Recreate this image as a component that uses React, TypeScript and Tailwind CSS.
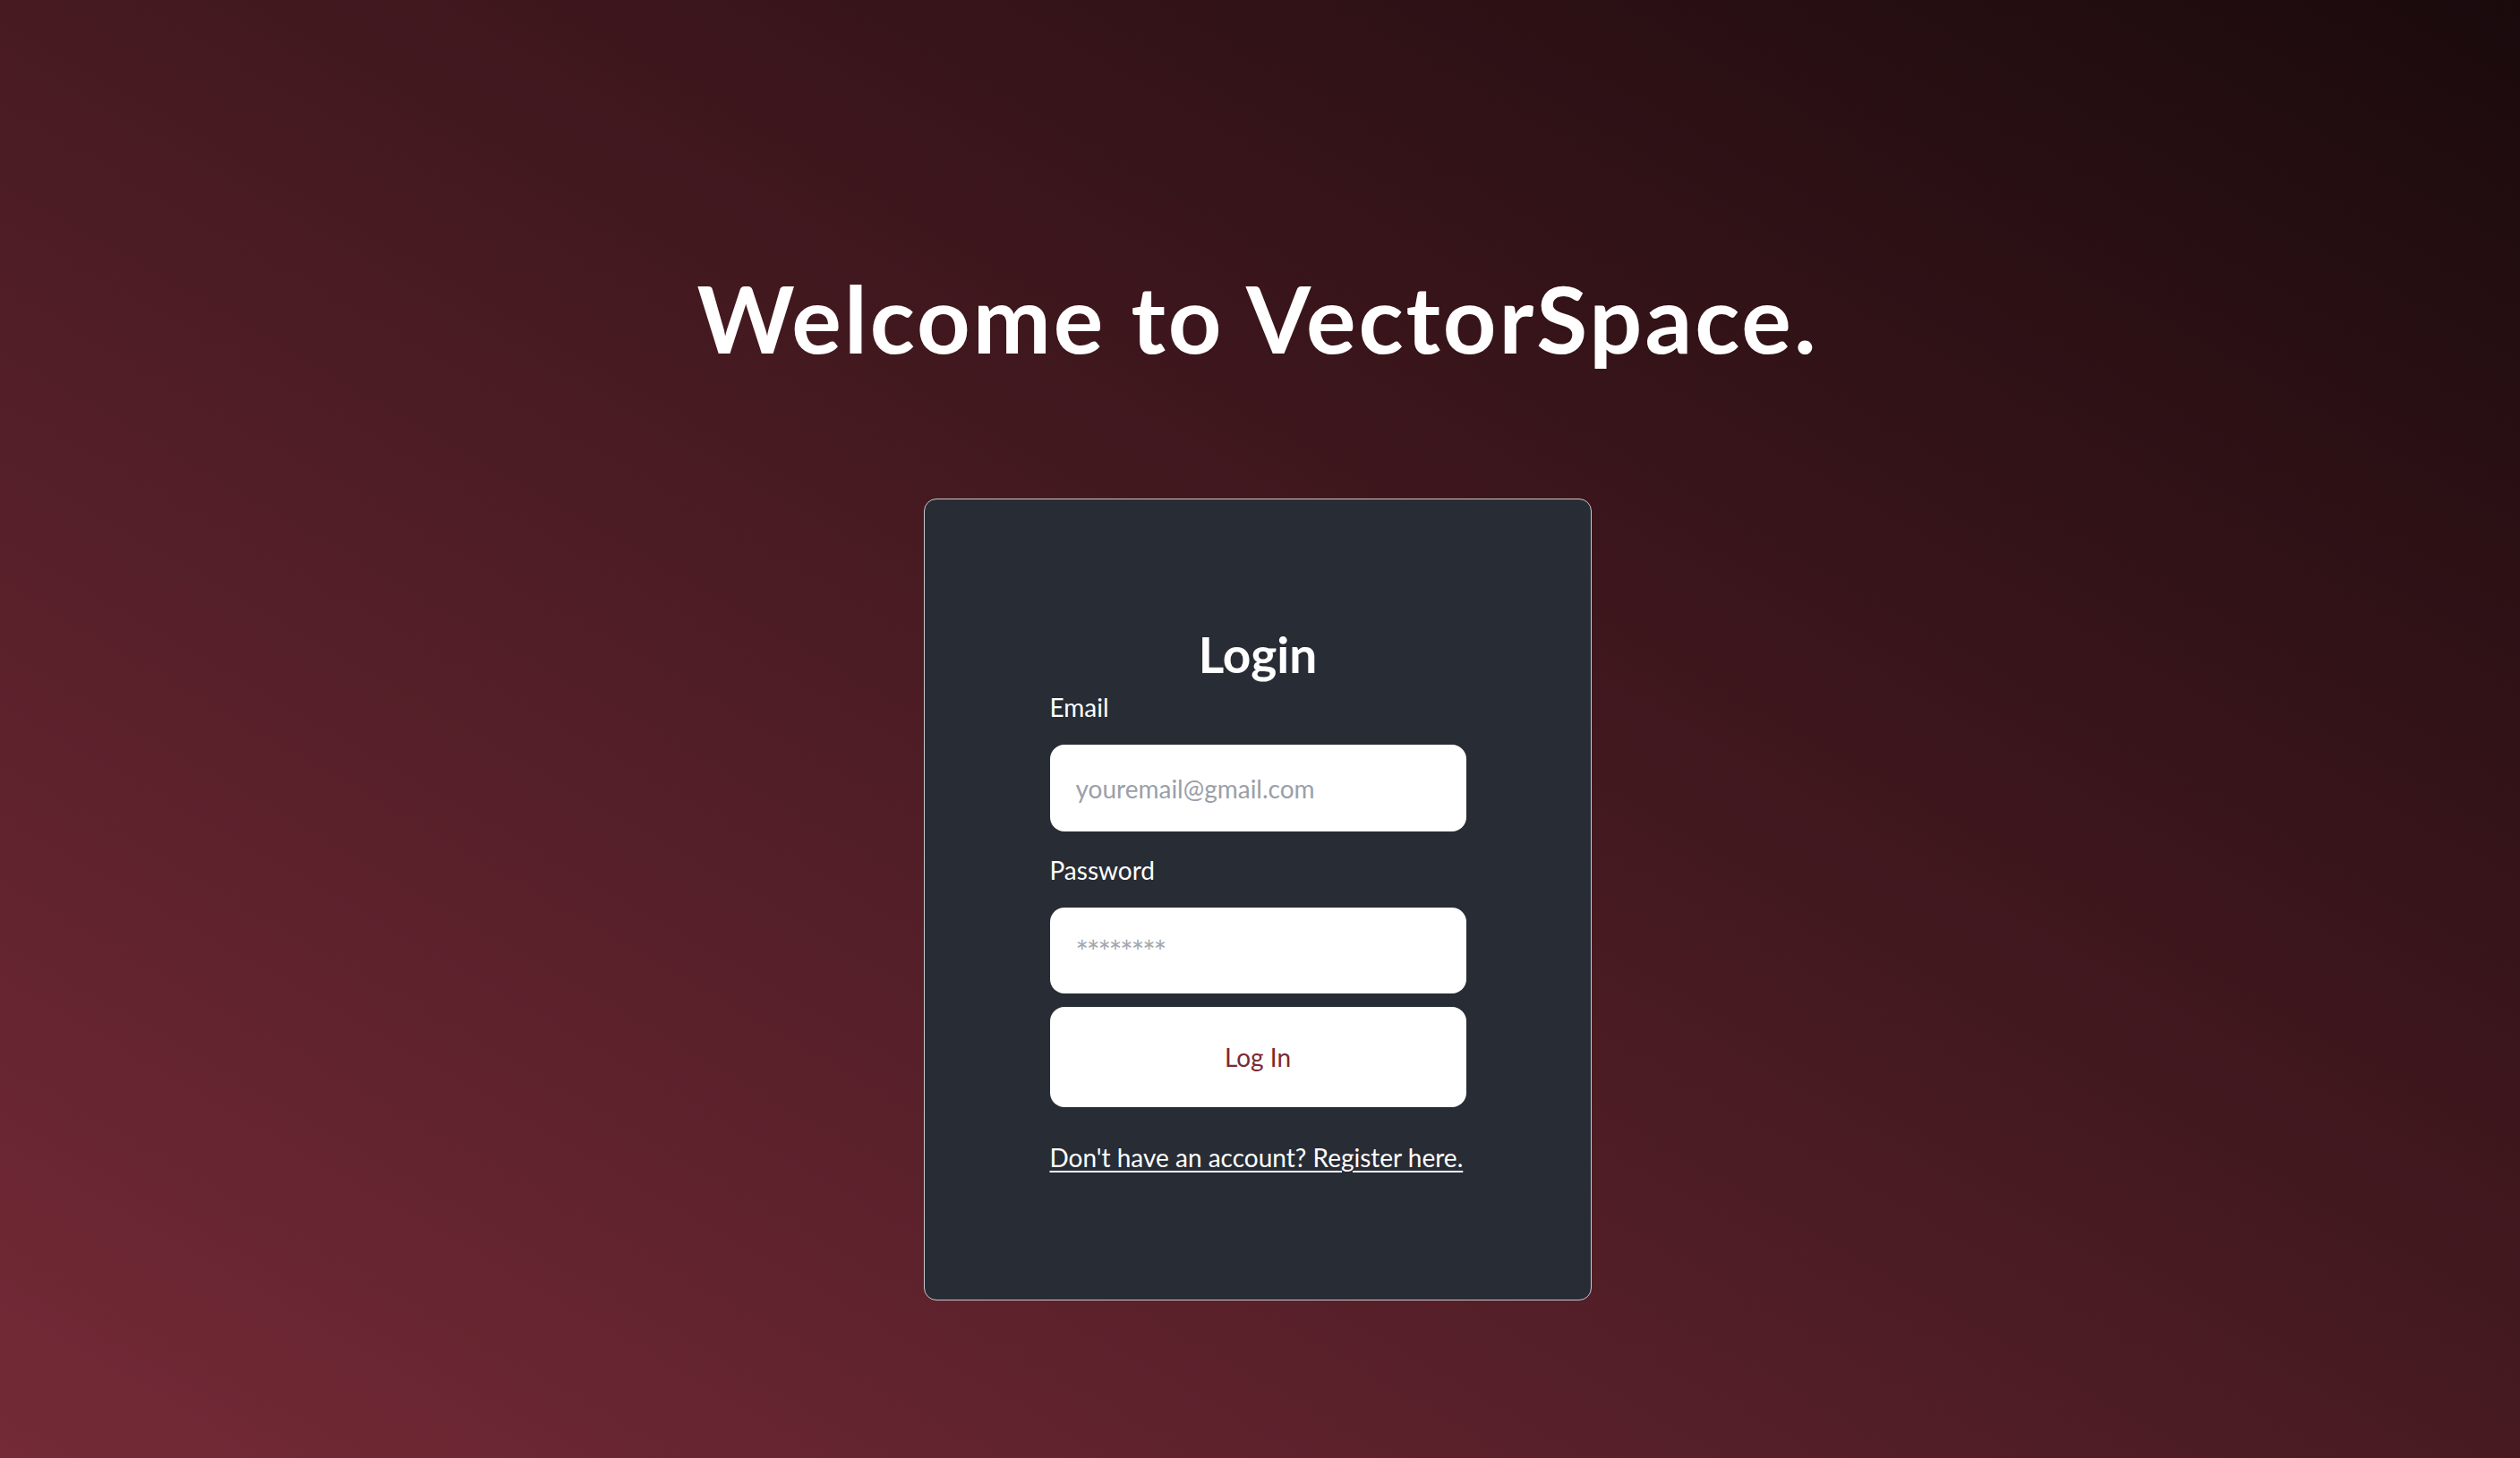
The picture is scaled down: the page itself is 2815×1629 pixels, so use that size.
export default function App() {
  return (
    <div className="min-h-screen w-full bg-[linear-gradient(to_top_right,#742a37,#1a0a0c)] font-['Lato','Open_Sans',sans-serif] text-white flex flex-col items-center pr-[5px]">
      {/* Heading */}
      <h1 className="pt-[303px] text-[104px] font-bold leading-none tracking-[3px]">
        Welcome to VectorSpace.
      </h1>

      {/* Login card */}
      <div className="mt-[150px] w-[746px] h-[896px] rounded-[14px] border border-[#c9c9cc] bg-[#282c34] flex flex-col items-center pt-[146px]">
        <div className="w-[465px] flex flex-col">
          <h2 className="text-center text-[55px] font-bold leading-none">Login</h2>

          <label className="mt-[17px] text-[28px] leading-none">Email</label>
          <input
            type="email"
            placeholder="youremail@gmail.com"
            className="mt-[28px] h-[97px] w-full rounded-[16px] bg-white px-[29px] text-[28px] text-gray-800 placeholder:text-[#9aa0aa] outline-none"
          />

          <label className="mt-[29px] text-[28px] leading-none">Password</label>
          <input
            type="password"
            placeholder="********"
            className="mt-[28px] h-[96px] w-full rounded-[16px] bg-white px-[29px] pt-[6px] text-[28px] text-gray-800 placeholder:text-[34px] placeholder:tracking-[-2px] placeholder:text-[#a3a7ae] outline-none"
          />

          <button className="mt-[15px] h-[112px] w-full rounded-[16px] bg-white text-[28px] text-[#7a2a32]">
            Log In
          </button>

          <a href="#" className="mt-[42px] text-[28px] leading-none underline underline-offset-[4px] text-white">
            Don't have an account? Register here.
          </a>
        </div>
      </div>
    </div>
  );
}
